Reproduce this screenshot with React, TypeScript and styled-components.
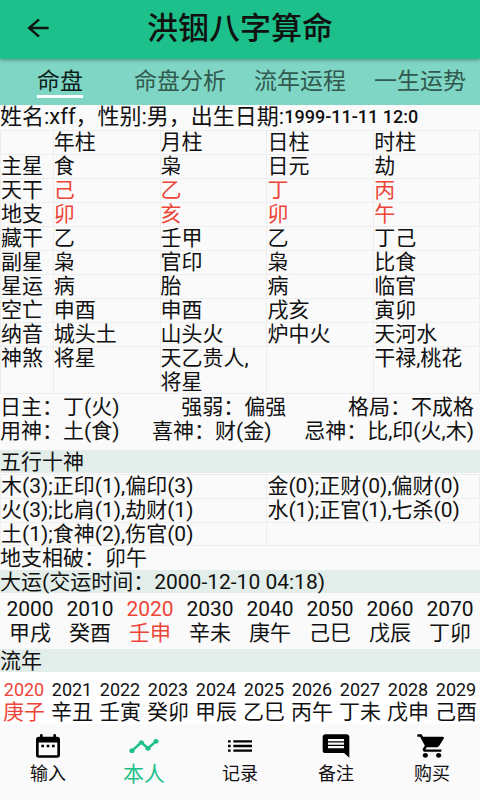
import React, { useState } from "react";
import styled, { createGlobalStyle } from "styled-components";
import {
  MdArrowBack,
  MdComment,
  MdDateRange,
  MdList,
  MdShoppingCart,
  MdTimeline,
} from "react-icons/md";

const GlobalStyle = createGlobalStyle`
  *, *::before, *::after { box-sizing: border-box; }
  body {
    margin: 0;
    background: #fafafa;
    color: #111;
    font-family: Roboto, "Noto Sans CJK SC", sans-serif;
    font-size: 21px;
    line-height: 24px;
  }
  button {
    margin: 0;
    padding: 0;
    border: 0;
    background: none;
    color: inherit;
    font: inherit;
    cursor: pointer;
  }
`;

const RED = "#ee4437";
const GREEN = "#1dbf8a";

const Screen = styled.div`
  display: flex;
  flex-direction: column;
  min-height: 100vh;
`;

const Header = styled.header`
  display: grid;
  grid-template-columns: 76px 1fr 76px;
  align-items: center;
  height: 59px;
  padding-bottom: 4px;
  background: ${GREEN};
  box-shadow: 0 1px 4px rgba(0, 0, 0, 0.35);
  position: relative;
  z-index: 1;
`;

const BackButton = styled.button`
  display: flex;
  justify-content: center;
`;

const Title = styled.h1`
  margin: 0;
  padding-top: 2px;
  font-size: 31px;
  line-height: 40px;
  font-weight: 500;
  text-align: center;
`;

const TabBar = styled.div`
  display: grid;
  grid-template-columns: repeat(4, 1fr);
  height: 46px;
  background: #7fd6c4;
`;

const Tab = styled.button<{ $active: boolean }>`
  display: flex;
  justify-content: center;
  font-size: 23px;
  line-height: 34px;
  padding-top: 6px;
  color: ${(p) => (p.$active ? "#0d1f1a" : "#31594e")};
  white-space: nowrap;

  span {
    height: 33px;
    border-bottom: 3px solid ${(p) => (p.$active ? "#fff" : "transparent")};
  }
`;

const Content = styled.main`
  flex: 1;
`;

const Profile = styled.p`
  display: flex;
  align-items: center;
  height: 24px;
  margin: 0;
  font-size: 22px;
  white-space: pre;
`;

const BirthDate = styled.time`
  font-size: 18px;
  font-weight: 500;
`;

const Table = styled.table`
  width: 100%;
  margin-top: 1px;
  table-layout: fixed;
  border-collapse: separate;
  border-spacing: 0;

  th, td {
    height: 24px;
    padding: 0 0 0 1px;
    box-shadow: inset 1px 1px #eeeeee;
    font-weight: 400;
    line-height: 24px;
    text-align: left;
    vertical-align: top;
  }

  th:last-child, td:last-child {
    border-right: 1px solid #eeeeee;
  }

  tr:last-child td, tr:last-child th {
    box-shadow: inset 1px 1px #eeeeee, inset 0 -1px #eeeeee;
  }

  thead tr:last-child td, thead tr:last-child th {
    box-shadow: inset 1px 1px #eeeeee;
  }
`;

const Col = styled.col<{ $share: string }>`
  width: ${(p) => p.$share};
`;

const Cell = styled.td<{ $red?: boolean }>`
  color: ${(p) => (p.$red ? RED : "inherit")};
`;

const Summary = styled.div`
  padding: 1px 6px 7px 0;
`;

const SummaryRow = styled.div`
  display: flex;
  justify-content: space-between;
  white-space: nowrap;
`;

const Band = styled.h2`
  margin: 0;
  height: 23px;
  background: #e3ede9;
  font-size: 21px;
  line-height: 25px;
  font-weight: 400;
`;

const Note = styled.p`
  margin: 0;
  line-height: 24px;
`;

const Years = styled.div<{ $count: number; $compact?: boolean }>`
  display: grid;
  grid-template-columns: repeat(${(p) => p.$count}, 1fr);
  padding: ${(p) => (p.$compact ? "8px 0 0" : "4px 0")};
  background: ${(p) => (p.$compact ? "#fff" : "transparent")};
`;

const YearButton = styled.button<{ $active: boolean; $compact?: boolean }>`
  display: flex;
  flex-direction: column;
  align-items: center;
  color: ${(p) => (p.$active ? RED : "inherit")};

  span:first-child {
    font-size: ${(p) => (p.$compact ? "18px" : "21px")};
    line-height: ${(p) => (p.$compact ? "20px" : "24px")};
  }
`;

const BottomNav = styled.nav`
  display: grid;
  grid-template-columns: repeat(5, 1fr);
  height: 76px;
  background: #fafafa;
`;

const NavButton = styled.button<{ $active: boolean }>`
  display: flex;
  flex-direction: column;
  align-items: center;
  padding-top: 8px;
  color: ${(p) => (p.$active ? GREEN : "#111")};
  font-size: ${(p) => (p.$active ? "21px" : "18px")};
  line-height: 28px;

  svg {
    color: ${(p) => (p.$active ? GREEN : "#000")};
  }
`;

const iconProps = {
  preserveAspectRatio: "none",
  style: { width: 32, height: 28 },
  "aria-hidden": true,
};

const tabs = ["命盘", "命盘分析", "流年运程", "一生运势"];

const chart = [
  ["主星", "食", "枭", "日元", "劫"],
  ["天干", "己", "乙", "丁", "丙"],
  ["地支", "卯", "亥", "卯", "午"],
  ["藏干", "乙", "壬甲", "乙", "丁己"],
  ["副星", "枭", "官印", "枭", "比食"],
  ["星运", "病", "胎", "病", "临官"],
  ["空亡", "申酉", "申酉", "戌亥", "寅卯"],
  ["纳音", "城头土", "山头火", "炉中火", "天河水"],
  ["神煞", "将星", "天乙贵人,将星", "", "干禄,桃花"],
];

const summary = [
  ["日主：丁(火)", "强弱：偏强", "格局：不成格"],
  ["用神：土(食)", "喜神：财(金)", "忌神：比,印(火,木)"],
];

const elements = [
  ["木(3);正印(1),偏印(3)", "金(0);正财(0),偏财(0)"],
  ["火(3);比肩(1),劫财(1)", "水(1);正官(1),七杀(0)"],
  ["土(1);食神(2),伤官(0)", ""],
];

const decades = [
  ["2000", "甲戌"], ["2010", "癸酉"], ["2020", "壬申"], ["2030", "辛未"],
  ["2040", "庚午"], ["2050", "己巳"], ["2060", "戊辰"], ["2070", "丁卯"],
];

const annual = [
  ["2020", "庚子"], ["2021", "辛丑"], ["2022", "壬寅"], ["2023", "癸卯"], ["2024", "甲辰"],
  ["2025", "乙巳"], ["2026", "丙午"], ["2027", "丁未"], ["2028", "戊申"], ["2029", "己酉"],
];

const navItems = [
  { label: "输入", Icon: MdDateRange },
  { label: "本人", Icon: MdTimeline },
  { label: "记录", Icon: MdList },
  { label: "备注", Icon: MdComment },
  { label: "购买", Icon: MdShoppingCart },
];

function YearPicker({ items, initial, compact }: { items: string[][]; initial: string; compact?: boolean }) {
  const [selected, setSelected] = useState(initial);
  return (
    <Years $count={items.length} $compact={compact}>
      {items.map(([year, pillar]) => (
        <YearButton
          key={year}
          type="button"
          $active={year === selected}
          $compact={compact}
          aria-pressed={year === selected}
          onClick={() => setSelected(year)}
        >
          <span>{year}</span>
          <span>{pillar}</span>
        </YearButton>
      ))}
    </Years>
  );
}

export default function App() {
  const [tab, setTab] = useState(0);
  const [section, setSection] = useState(1);

  return (
    <Screen>
      <GlobalStyle />
      <Header>
        <BackButton type="button" aria-label="返回">
          <MdArrowBack {...iconProps} />
        </BackButton>
        <Title>洪铟八字算命</Title>
      </Header>
      <TabBar role="tablist">
        {tabs.map((name, i) => (
          <Tab key={name} type="button" role="tab" aria-selected={i === tab} $active={i === tab} onClick={() => setTab(i)}>
            <span>{name}</span>
          </Tab>
        ))}
      </TabBar>
      <Content>
        <Profile>
          姓名:xff，性别:男，出生日期:<BirthDate>1999-11-11 12:0</BirthDate>
        </Profile>
        <Table>
          <colgroup>
            <Col $share="11%" />
            <Col $share="22.25%" />
            <Col $share="22.25%" />
            <Col $share="22.25%" />
            <Col $share="22.25%" />
          </colgroup>
          <thead>
            <tr>
              <Cell />
              <th scope="col">年柱</th>
              <th scope="col">月柱</th>
              <th scope="col">日柱</th>
              <th scope="col">时柱</th>
            </tr>
          </thead>
          <tbody>
            {chart.map(([name, ...cells]) => (
              <tr key={name}>
                <th scope="row">{name}</th>
                {cells.map((text, i) => (
                  <Cell key={i} $red={name === "天干" || name === "地支"}>{text}</Cell>
                ))}
              </tr>
            ))}
          </tbody>
        </Table>
        <Summary>
          {summary.map((row) => (
            <SummaryRow key={row[0]}>
              {row.map((text) => <span key={text}>{text}</span>)}
            </SummaryRow>
          ))}
        </Summary>
        <Band>五行十神</Band>
        <Table>
          <colgroup>
            <Col $share="55.5%" />
            <Col $share="44.5%" />
          </colgroup>
          <tbody>
            {elements.map((row) => (
              <tr key={row[0]}>
                {row.map((text, i) => <Cell key={i}>{text}</Cell>)}
              </tr>
            ))}
          </tbody>
        </Table>
        <Note>地支相破：卯午</Note>
        <Band>大运(交运时间：2000-12-10 04:18)</Band>
        <YearPicker items={decades} initial="2020" />
        <Band>流年</Band>
        <YearPicker items={annual} initial="2020" compact />
      </Content>
      <BottomNav>
        {navItems.map(({ label, Icon }, i) => (
          <NavButton
            key={label}
            type="button"
            $active={i === section}
            aria-current={i === section ? "page" : undefined}
            onClick={() => setSection(i)}
          >
            <Icon {...iconProps} />
            {label}
          </NavButton>
        ))}
      </BottomNav>
    </Screen>
  );
}
